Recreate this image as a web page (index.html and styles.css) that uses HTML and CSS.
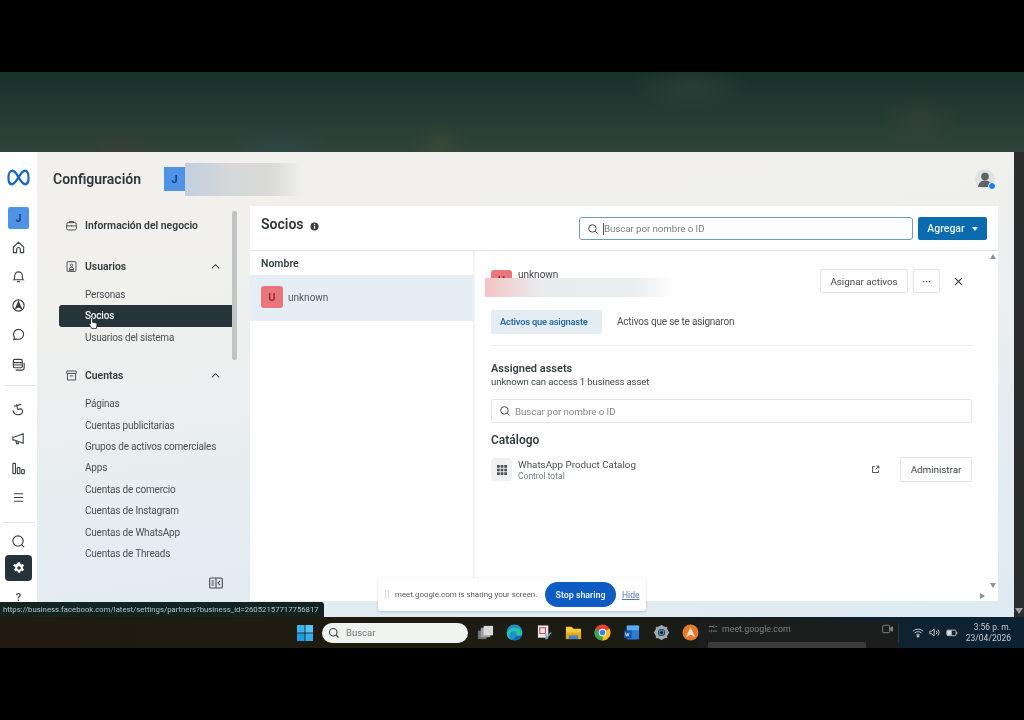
FILE: index.html
```html
<!DOCTYPE html>
<html lang="es">
<head>
    <meta charset="UTF-8">
    <title>Configuración - Socios</title>
    <link rel="stylesheet" href="styles.css">
</head>
<body>
    <div class="screen">
        <div class="letterbox top"></div>
        <div class="backdrop"></div>

        <div class="window">
            <nav class="rail">
                <svg class="meta" viewBox="0 0 24 15" preserveAspectRatio="none" fill="none"><path d="M12 7.500C9.500 3.200 7.800 1.600 5.500 1.600 3 1.600 1.500 4.200 1.500 8 1.500 11.300 3 13.400 5.200 13.400 7.500 13.400 9 11.300 12 7.500 15 3.200 16.500 1.600 18.700 1.600 21 1.600 22.500 4.200 22.500 8 22.500 11.300 21 13.400 18.800 13.400 16.500 13.400 15 11.300 12 7.500Z"/></svg>
                <div class="rail-tile">J</div>
                <div class="rail-group">
                    <svg viewBox="0 0 16 16"><path d="M2.500 7.500 8 2.500l5.500 5v6H10v-3.500a2 2 0 0 0-4 0v3.500H2.500Z"/></svg>
                    <svg viewBox="0 0 16 16"><path d="M3 11.500c1-1 1-2 1-4.500a4 4 0 0 1 8 0c0 2.500 0 3.500 1 4.500ZM6.500 13.500h3"/></svg>
                    <svg viewBox="0 0 16 16"><circle cx="8" cy="8" r="6"/><path class="solid" d="M8 4 11 11 8 9.500 5 11Z"/></svg>
                    <svg viewBox="0 0 16 16"><path d="M8 2.500a5.500 5.300 0 0 1 0 10.600c-.8 0-1.500-.1-2.200-.4L3 13.500l.6-2.700A5.300 5.300 0 0 1 8 2.500Z"/></svg>
                    <svg viewBox="0 0 16 16"><rect x="2.500" y="2.500" width="9.500" height="9" rx="1.500"/><path d="M2.500 6h9.500M2.500 8.500h9.500M14 6v6a2 2 0 0 1-2 2H5"/></svg>
                </div>
                <div class="rail-line"></div>
                <div class="rail-group second">
                    <svg viewBox="0 0 16 16"><path d="M3 4.500 11 2.500M6 2.500 7 8M2 9c1 4 4 5 7 4.500 3-.5 4-3 3-5-1-1.500-3-1.500-4.500 0"/></svg>
                    <svg viewBox="0 0 16 16"><path d="M2 6.500v3l2.500.3L13 13V3L4.500 6.200ZM5 10l1 3.500h2L7 10.800"/></svg>
                    <svg viewBox="0 0 16 16"><rect x="2" y="2.500" width="2.800" height="11" rx=".8"/><rect x="6.700" y="7" width="2.800" height="6.500" rx=".8"/><rect x="11.400" y="9" width="2.800" height="4.500" rx=".8"/></svg>
                    <svg viewBox="0 0 16 16"><path d="M3 4h10M3 8h10M3 12h10"/></svg>
                </div>
                <div class="rail-line low"></div>
                <svg class="rail-search" viewBox="0 0 16 16"><circle cx="7.500" cy="7.500" r="5.500"/><path d="m11.500 11.500 2.500 2.500"/></svg>
                <div class="rail-gear">
                    <svg viewBox="0 0 16 16"><path class="white" fill-rule="evenodd" d="M6.800 1.500h2.400l.4 1.900 1.100.6 1.800-.6 1.200 2.100-1.400 1.300v1.400l1.400 1.300-1.200 2.100-1.800-.6-1.100.6-.4 1.900H6.800l-.4-1.900-1.100-.6-1.800.6-1.200-2.100 1.400-1.300V6.800L1.300 5.500l1.200-2.100 1.800.6 1.100-.6ZM8 6a2 2 0 1 0 0 4 2 2 0 0 0 0-4Z"/></svg>
                </div>
                <div class="rail-help">?</div>
            </nav>

            <div class="main">
                <header class="topbar">
                    <h1>Configuración</h1>
                    <div class="biz-tile">J</div>
                    <div class="biz-name"></div>
                    <div class="me">
                        <svg viewBox="0 0 20 20"><circle cx="10" cy="10" r="10" fill="#dfe2e3"/><circle cx="10" cy="7.500" r="3.800" fill="#5c6266"/><path d="M3 18c.8-5 3.500-6.500 7-6.500s6.200 1.500 7 6.500Z" fill="#5c6266"/></svg>
                        <span class="me-badge"></span>
                    </div>
                </header>

                <div class="body">
                    <aside class="sidebar">
                        <div class="side-scroll">
                            <div class="side-head first">
                                <svg viewBox="0 0 16 16"><rect x="2" y="4.500" width="12" height="9" rx="2"/><path d="M5.500 4.500V3h5v1.500M2 8.500h12M8 7.800v1.500"/></svg>
                                <span>Información del negocio</span>
                            </div>
                            <div class="side-head">
                                <svg viewBox="0 0 16 16"><rect x="2.500" y="2" width="11" height="12" rx="1"/><circle cx="8" cy="6.500" r="1.500"/><path d="M5 11.500c.5-2 1.500-2.500 3-2.500s2.500.5 3 2.500ZM5 12.500h6"/></svg>
                                <span>Usuarios</span>
                                <svg class="chev" viewBox="0 0 12 12"><path d="m2 8 4-4 4 4"/></svg>
                            </div>
                            <ul class="side-list">
                                <li>Personas</li>
                                <li class="on">Socios</li>
                                <li>Usuarios del sistema</li>
                            </ul>
                            <div class="side-head accounts">
                                <svg viewBox="0 0 16 16"><rect x="2" y="2.500" width="12" height="3" rx=".6"/><path d="M3 5.500V13.500H13V5.500M6 8.500h4"/></svg>
                                <span>Cuentas</span>
                                <svg class="chev" viewBox="0 0 12 12"><path d="m2 8 4-4 4 4"/></svg>
                            </div>
                            <ul class="side-list">
                                <li>Páginas</li>
                                <li>Cuentas publicitarias</li>
                                <li>Grupos de activos comerciales</li>
                                <li>Apps</li>
                                <li>Cuentas de comercio</li>
                                <li>Cuentas de Instagram</li>
                                <li>Cuentas de WhatsApp</li>
                                <li>Cuentas de Threads</li>
                            </ul>
                            <div class="side-foot">
                                <svg viewBox="0 0 14 12"><rect x=".7" y="1" width="12.600" height="10" rx="1"/><path d="M7 1v10M2.500 4h2.500M2.500 6h2.500M2.500 8h2.500M11 3.800 9 6l2 2.200"/></svg>
                            </div>
                        </div>
                        <div class="side-thumb"></div>
                    </aside>

                    <section class="card">
                        <div class="card-head">
                            <h2>Socios</h2>
                            <svg class="info" viewBox="0 0 10 10"><circle cx="5" cy="5" r="4.500" fill="#3a3f42"/><path d="M4.300 4.500h1.400v3H4.300ZM4.300 2.300h1.400v1.300H4.300Z" fill="#fff"/></svg>
                            <div class="search top-search">
                                <svg viewBox="0 0 16 16"><circle cx="7.200" cy="7.200" r="5"/><path d="m11 11 3 3"/></svg>
                                <span class="caret"></span>
                                <span>Buscar por nombre o ID</span>
                            </div>
                            <button class="add">Agregar <i></i></button>
                        </div>

                        <div class="split">
                            <div class="people">
                                <div class="people-head">Nombre</div>
                                <div class="people-row">
                                    <div class="u-tile">U</div>
                                    <span>unknown</span>
                                </div>
                            </div>

                            <div class="detail">
                                <div class="detail-head">
                                    <div class="u-tile mini">U</div>
                                    <span class="detail-name">unknown</span>
                                    <button class="ghost assign">Asignar activos</button>
                                    <button class="ghost more">···</button>
                                    <svg class="close" viewBox="0 0 12 12"><path d="m1.500 1.500 9 9M10.500 1.500l-9 9"/></svg>
                                </div>
                                <div class="tabs">
                                    <span class="tab active">Activos que asignaste</span>
                                    <span class="tab">Activos que se te asignaron</span>
                                </div>
                                <h3>Assigned assets</h3>
                                <p class="sub">unknown can access 1 business asset</p>
                                <div class="search asset-search">
                                    <svg viewBox="0 0 16 16"><circle cx="7.200" cy="7.200" r="5"/><path d="m11 11 3 3"/></svg>
                                    <span>Buscar por nombre o ID</span>
                                </div>
                                <h3 class="cat">Catálogo</h3>
                                <div class="asset">
                                    <div class="asset-icon">
                                        <svg viewBox="0 0 11 11"><path d="M0 0h3v3H0ZM4 0h3v3H4ZM8 0h3v3H8ZM0 4h3v3H0ZM4 4h3v3H4ZM8 4h3v3H8ZM0 8h3v3H0ZM4 8h3v3H4ZM8 8h3v3H8Z"/></svg>
                                    </div>
                                    <div class="asset-text">
                                        <div>WhatsApp Product Catalog</div>
                                        <small>Control total</small>
                                    </div>
                                    <svg class="ext" viewBox="0 0 12 12"><path d="M5 2H2v8h8V7M7 1.500h3.500V5M10.500 1.500 6 6"/></svg>
                                    <button class="ghost manage">Administrar</button>
                                </div>
                            </div>
                            <i class="arrow up"></i>
                            <i class="arrow down"></i>
                            <i class="arrow right"></i>
                        </div>
                    </section>
                </div>
            </div>

            <div class="page-scroll"><i></i></div>

            <!-- smears over the name, the video had these blurred out -->
            <div class="smear"></div>
            <svg class="cursor" viewBox="0 0 12 16"><path d="M4 1.500c1 0 1.500.5 1.500 1.500v4l4 1c1 .3 1.500.8 1.300 2L10 14.500H4.500L1.500 10 1 8.500l2 .8V3c0-1 .3-1.500 1-1.500Z" fill="#fff" stroke="#222" stroke-width="1"/></svg>
            <div class="status-url">https://business.facebook.com/latest/settings/partners?business_id=26052157717756817</div>
            <div class="meet">
                <span class="grip"></span>
                <span class="meet-text">meet.google.com is sharing your screen.</span>
                <button class="stop">Stop sharing</button>
                <a class="hide">Hide</a>
            </div>
        </div>

        <footer class="taskbar">
            <svg class="win" viewBox="0 0 16 16"><path fill="#3db4ee" d="M0 0h7.600v7.600H0Z"/><path fill="#58c6f5" d="M8.400 0H16v7.600H8.400Z"/><path fill="#1f9ae0" d="M0 8.400h7.600V16H0Z"/><path fill="#34aeea" d="M8.400 8.400H16V16H8.400Z"/></svg>
            <div class="task-search">
                <svg viewBox="0 0 16 16"><circle cx="7" cy="7" r="5"/><path d="m10.500 10.500 3.500 3.500"/></svg>
                <span>Buscar</span>
            </div>
            <div class="task-icons">
                <svg viewBox="0 0 18 18"><rect x="1" y="7" width="9" height="9" fill="#6f7478"/><rect x="4" y="4" width="10" height="10" fill="#9aa0a3"/><rect x="7" y="2" width="10" height="10" fill="#d6dadb"/></svg>
                <svg viewBox="0 0 18 18"><circle cx="9" cy="9" r="8.500" fill="#1c8fd0"/><path d="M1 11C2 5 7 3 11 4c4 1 6 4 6 6 0 2-3 2.500-5 2-2.500-.5-2-3-.5-3.500C9 7 4 7 3.500 12c-.2 2 1 3.500 3 4.500C3.500 16 1.500 14 1 11Z" fill="#2bc4a0"/><path d="M11 12.500c2 .8 4 .5 5.500-.5-1 3-4 5-7 5-1.500 0-3-.5-3-.5 2 0 3.500-2 4.500-4Z" fill="#1565b0"/></svg>
                <svg viewBox="0 0 18 18"><rect x="2" y="1.500" width="11" height="13" fill="#e8e8ea"/><rect x="4" y="4" width="6" height="6" fill="none" stroke="#c23b3b"/><path d="M10 16 16 9M12 16l-2-6" stroke="#7da0c8" stroke-width="1.400"/></svg>
                <svg viewBox="0 0 18 18"><path d="M1 3h6l2 2h8v11H1Z" fill="#f7c93e"/><rect x="1" y="9" width="16" height="7" fill="#e9a820"/><rect x="4" y="12" width="10" height="4" fill="#3e87c7"/></svg>
                <svg viewBox="0 0 18 18"><circle cx="9" cy="9" r="8.500" fill="#e5413a"/><path d="M9 9 16.400 5A8.500 8.500 0 0 1 9 17.500Z" fill="#f8c51e"/><path d="M9 9 9 17.500A8.500 8.500 0 0 1 1.600 5Z" fill="#34a853"/><circle cx="9" cy="9" r="4" fill="#fff"/><circle cx="9" cy="9" r="3" fill="#3a82e4"/></svg>
                <svg viewBox="0 0 18 18"><rect x="4" y="1.500" width="13" height="15" rx="1.500" fill="#2b7cd3"/><rect x="4" y="1.500" width="13" height="5" rx="1" fill="#5aa9ec"/><rect x="1" y="7" width="8" height="8" rx="1" fill="#174f9c"/><path d="m2.500 9 1 4 1-3 1 3 1-4" stroke="#fff" stroke-width=".7" fill="none"/></svg>
                <svg viewBox="0 0 18 18"><circle cx="9" cy="9" r="5.500" fill="none" stroke="#9fa8b0" stroke-width="3.400"/><circle cx="9" cy="9" r="2.400" fill="none" stroke="#3f8bc9" stroke-width="1.400"/><path d="M9 1v3M9 14v3M1 9h3M14 9h3M3.300 3.300l2 2M12.700 12.700l2 2M14.700 3.300l-2 2M5.300 12.700l-2 2" stroke="#9fa8b0" stroke-width="2"/></svg>
                <svg viewBox="0 0 18 18"><circle cx="9" cy="9" r="8.500" fill="#e8792a"/><path d="M4 14 9 3.500l5 10.500-5-3Z" fill="#fbe1c5"/></svg>
            </div>
            <div class="task-meet">
                <svg viewBox="0 0 12 12"><path d="M1 3h5M9 3h2M1 8.500h2M6 8.500h5M7 1.500v3M4.500 7v3"/></svg>
                <span>meet.google.com</span>
                <svg class="cam" viewBox="0 0 12 10"><rect x=".7" y="1" width="7.600" height="8" rx="1"/><path class="solid" d="M9 4l2.500-1.500v5L9 6Z"/></svg>
                <div class="thumb"></div>
            </div>
            <div class="tray">
                <svg viewBox="0 0 14 12"><path d="M1 4.500a8.500 8.500 0 0 1 12 0M3 6.700a5.500 5.500 0 0 1 8 0M5 8.800a2.800 2.800 0 0 1 4 0"/><circle class="solid" cx="7" cy="10.500" r="1"/></svg>
                <svg viewBox="0 0 14 12"><path d="M1 4.500v3h2l3 2.500V2L3 4.500ZM8.500 4a3 3 0 0 1 0 4M10.500 2.500a5.500 5.500 0 0 1 0 7"/></svg>
                <svg viewBox="0 0 15 12"><rect x="1" y="3" width="11.500" height="7" rx="1.500"/><path d="M13.500 5.300v2.400"/><rect class="solid" x="2" y="4" width="4.500" height="5"/></svg>
                <div class="clock"><div>3:56 p. m.</div><div>23/04/2026</div></div>
            </div>
        </footer>
        <div class="letterbox bottom"></div>
    </div>
</body>
</html>
```

FILE: styles.css
```css
* {
    box-sizing: border-box;
}

html, body {
    margin: 0;
    padding: 0;
    background: #000;
}

body {
    font-family: "Roboto", "Noto Sans", sans-serif;
    font-size: 10.5px;
    color: #3d4347;
}

button {
    font-family: inherit;
    cursor: pointer;
}

ul {
    list-style: none;
    margin: 0;
    padding: 0;
}

/* the source is a video frame, so everything is a touch soft */
.screen {
    width: 1024px;
    height: 720px;
    display: flex;
    flex-direction: column;
    overflow: hidden;
    filter: blur(.35px);
}

.letterbox.top {
    height: 72px;
    flex: none;
}

.letterbox.bottom {
    height: 72px;
    flex: none;
}

.backdrop {
    height: 80px;
    flex: none;
    background:
        radial-gradient(ellipse 40px 30px at 120px 80px, rgba(90, 50, 40, .22), transparent),
        radial-gradient(ellipse 30px 30px at 440px 75px, rgba(90, 90, 30, .22), transparent),
        radial-gradient(ellipse 50px 30px at 280px 75px, rgba(50, 90, 100, .18), transparent),
        radial-gradient(ellipse 60px 25px at 690px 15px, rgba(90, 110, 100, .18), transparent),
        radial-gradient(ellipse 40px 30px at 920px 50px, rgba(100, 80, 60, .18), transparent),
        linear-gradient(#18312a, #2f443b);
}

/* app window */
.window {
    position: relative;
    height: 465px;
    flex: none;
    display: flex;
    background: #fff;
}

.rail {
    width: 37px;
    flex: none;
    display: flex;
    flex-direction: column;
    align-items: center;
    background: #fff;
}

.rail svg {
    fill: none;
    stroke: #3a4044;
    stroke-width: 1.200;
}

.rail svg .solid {
    fill: #3a4044;
}

.rail .meta {
    width: 23px;
    height: 17px;
    margin-top: 17px;
    stroke: #1668c4;
    stroke-width: 2.300;
}

.rail-tile {
    width: 21px;
    height: 22px;
    margin-top: 21px;
    border-radius: 2px;
    background: #4f93e6;
    color: #123f78;
    font-size: 10px;
    font-weight: 700;
    display: flex;
    align-items: center;
    justify-content: center;
}

.rail-group {
    display: flex;
    flex-direction: column;
    align-items: center;
    gap: 14.250px;
    margin-top: 10.500px;
}

.rail-group svg {
    width: 15px;
    height: 15px;
}

.rail-group.second {
    margin-top: 15.500px;
    gap: 14.500px;
}

.rail-line {
    width: 32px;
    height: 1px;
    background: #e6e8ea;
    margin-top: 13.500px;
}

.rail-line.low {
    margin-top: 16.500px;
}

.rail-search {
    width: 15px;
    height: 15px;
    margin-top: 11px;
    flex: none;
}

.rail-gear {
    width: 27px;
    height: 26px;
    margin-top: 6px;
    background: #27333a;
    border-radius: 4px;
    display: flex;
    align-items: center;
    justify-content: center;
}

.rail-gear svg {
    width: 14px;
    height: 14px;
    stroke: none;
}

.rail-gear .white {
    fill: #fff;
}

.rail-help {
    margin-top: 10px;
    font-size: 11px;
    font-weight: 600;
    color: #4a5054;
}

.main {
    flex: 1;
    min-width: 0;
    display: flex;
    flex-direction: column;
    background: linear-gradient(172deg, #f2f0ec 0%, #f0f0ed 25%, #e3ecf2 75%, #deeaf2 100%);
}

.topbar {
    height: 54px;
    flex: none;
    display: flex;
    align-items: center;
    padding-left: 16px;
}

.topbar h1 {
    margin: 0;
    font-size: 14px;
    font-weight: 600;
    color: #2f3538;
    width: 111px;
}

.biz-tile {
    width: 21px;
    height: 24px;
    background: #4f93e6;
    color: #123f78;
    font-size: 11px;
    font-weight: 700;
    display: flex;
    align-items: center;
    justify-content: center;
}

.biz-name {
    width: 115px;
    height: 33px;
    background: linear-gradient(90deg, #c3cfde, #d6d7d9 40%, #dadad8 75%, #eeeeea);
}

.me {
    position: relative;
    width: 20px;
    height: 20px;
    margin-left: auto;
    margin-right: 19px;
}

.me svg {
    display: block;
    width: 20px;
    height: 20px;
}

.me-badge {
    position: absolute;
    right: -1px;
    bottom: -1px;
    width: 8px;
    height: 8px;
    border-radius: 50%;
    background: #1877f2;
    border: 1px solid #fff;
}

.body {
    height: 395px;
    display: flex;
}

.sidebar {
    position: relative;
    width: 213px;
    flex: none;
    display: flex;
}

.side-scroll {
    width: 173px;
    margin-left: 22px;
    padding-top: 8px;
}

.side-head {
    display: flex;
    align-items: center;
    gap: 7px;
    height: 22px;
    padding-left: 6px;
    padding-right: 11px;
    margin-top: 19px;
    font-size: 10.400px;
    font-weight: 600;
    color: #32383b;
}

.side-head.first {
    margin-top: 0;
}

.side-head.accounts {
    margin-top: 16px;
}

.side-head svg {
    width: 13px;
    height: 13px;
    flex: none;
    fill: none;
    stroke: #3a4044;
    stroke-width: 1.100;
}

.side-head .chev {
    width: 11px;
    height: 11px;
    margin-left: auto;
}

.side-list {
    margin-top: 7px;
}

.side-list li {
    height: 21.400px;
    line-height: 21.400px;
    padding-left: 26px;
    color: #4a5054;
    font-size: 10px;
    letter-spacing: -.2px;
}

.side-list li.on {
    background: #26343a;
    color: #f1f4f5;
    border-radius: 3px 0 0 3px;
    font-weight: 500;
}

.side-foot {
    display: flex;
    justify-content: flex-end;
    padding-right: 9px;
    margin-top: 13px;
}

.side-foot svg {
    width: 14px;
    height: 12px;
    fill: none;
    stroke: #40474b;
    stroke-width: 1.100;
}

.side-thumb {
    position: absolute;
    left: 195px;
    top: 5px;
    width: 5px;
    height: 149px;
    background: #c2c5c6;
    border-radius: 2px;
}

.card {
    width: 748px;
    flex: none;
    background: #fff;
    display: flex;
    flex-direction: column;
}

.card-head {
    height: 45px;
    flex: none;
    display: flex;
    align-items: flex-start;
    padding: 10px 11px 0 11px;
    border-bottom: 1px solid #e2e5e6;
}

.card-head h2 {
    margin: 0;
    font-size: 14px;
    line-height: 17px;
    font-weight: 600;
    color: #2f3538;
}

.info {
    width: 9px;
    height: 9px;
    margin: 6px 0 0 6px;
}

.search {
    display: flex;
    align-items: center;
    gap: 4px;
    background: #fff;
    color: #7b8185;
    font-size: 9.800px;
    letter-spacing: -.1px;
}

.search svg {
    width: 12px;
    height: 12px;
    flex: none;
    fill: none;
    stroke: #3f4548;
    stroke-width: 1.300;
}

.top-search {
    width: 334px;
    height: 23px;
    margin: 1px 0 0 auto;
    padding-left: 7px;
    border: 1px solid #6f9fae;
    border-radius: 3px;
}

.caret {
    width: 1px;
    height: 12px;
    background: #555;
    margin-right: -4px;
}

.add {
    width: 69px;
    height: 23px;
    margin: 1px 0 0 5px;
    border: none;
    border-radius: 2px;
    background: #0a6cae;
    color: #e6f1f8;
    font-size: 10.500px;
    font-weight: 500;
    display: flex;
    align-items: center;
    justify-content: center;
    gap: 7px;
}

.add i {
    width: 0;
    height: 0;
    border-left: 3.500px solid transparent;
    border-right: 3.500px solid transparent;
    border-top: 4px solid #e6f1f8;
}

.split {
    position: relative;
    flex: 1;
    display: flex;
    min-height: 0;
}

.people {
    width: 225px;
    flex: none;
    border-right: 2px solid #f1f3f4;
}

.people-head {
    height: 24px;
    padding: 6px 0 0 11px;
    line-height: 13px;
    font-weight: 600;
    color: #3a4044;
}

.people-row {
    height: 46px;
    display: flex;
    align-items: center;
    gap: 5px;
    padding: 0 0 2px 11px;
    background: #e6eef5;
    color: #50565a;
    font-size: 10px;
}

.u-tile {
    width: 22px;
    height: 22px;
    border-radius: 3px;
    background: #e9767b;
    color: #a32c33;
    font-size: 11px;
    font-weight: 700;
    display: flex;
    align-items: center;
    justify-content: center;
}

.detail {
    flex: 1;
    min-width: 0;
    padding: 18px 26px 0 16px;
}

.detail-head {
    display: flex;
    align-items: flex-start;
    height: 41px;
}

.u-tile.mini {
    width: 21px;
    height: 21px;
    flex: none;
    margin-top: 1px;
}

.detail-name {
    margin-left: 6px;
    font-size: 10px;
    line-height: 12px;
    color: #3f4548;
}

.ghost {
    background: #fff;
    border: 1px solid #dfe2e4;
    border-radius: 2px;
    color: #40464a;
    font-size: 9.800px;
    padding: 0;
}

.assign {
    width: 88px;
    height: 24px;
    margin-left: auto;
}

.more {
    width: 27px;
    height: 24px;
    margin-left: 5px;
    font-weight: 700;
}

.close {
    width: 9px;
    height: 9px;
    margin: 8px 9px 0 14px;
    fill: none;
    stroke: #33393c;
    stroke-width: 1.500;
}

.tabs {
    display: flex;
    align-items: center;
    gap: 6px;
    height: 36px;
    padding-bottom: 11px;
    border-bottom: 1px solid #eceeef;
    margin-bottom: 16px;
}

.tab {
    height: 24px;
    line-height: 24px;
    padding: 0 9px;
    color: #4a5054;
    font-size: 10px;
    letter-spacing: -.2px;
}

.tab.active {
    width: 111px;
    background: #e4edf3;
    border-radius: 2px;
    color: #2a6c9e;
    font-size: 9.300px;
    font-weight: 600;
    white-space: nowrap;
}

h3 {
    margin: 0;
    font-size: 11px;
    line-height: 14px;
    font-weight: 600;
    color: #353b3e;
}

.sub {
    margin: 0;
    font-size: 9.600px;
    letter-spacing: -.15px;
    line-height: 12px;
    color: #3f4548;
}

.asset-search {
    height: 24px;
    margin-top: 11px;
    padding-left: 7px;
    border: 1px solid #e3e6e8;
    border-radius: 2px;
    color: #83898d;
}

h3.cat {
    margin-top: 10px;
    font-size: 12px;
}

.asset {
    display: flex;
    align-items: center;
    margin-top: 10px;
}

.asset-icon {
    width: 21px;
    height: 23px;
    flex: none;
    border-radius: 4px;
    background: #eef1ef;
    display: flex;
    align-items: center;
    justify-content: center;
}

.asset-icon svg {
    width: 10px;
    height: 10px;
    fill: #494f52;
}

.asset-text {
    margin-left: 6px;
    line-height: 13px;
    color: #4a5054;
    font-size: 9.800px;
}

.asset-text small {
    display: block;
    font-size: 8.500px;
    line-height: 10px;
    color: #777d81;
}

.ext {
    width: 9px;
    height: 9px;
    margin-left: auto;
    fill: none;
    stroke: #3f4548;
    stroke-width: 1.200;
}

.manage {
    width: 72px;
    height: 25px;
    margin-left: 20px;
}

.arrow {
    position: absolute;
    width: 0;
    height: 0;
}

.arrow.up {
    right: 2px;
    top: 3px;
    border-left: 3.500px solid transparent;
    border-right: 3.500px solid transparent;
    border-bottom: 5px solid #8c9193;
}

.arrow.down {
    right: 2px;
    bottom: 13px;
    border-left: 3.500px solid transparent;
    border-right: 3.500px solid transparent;
    border-top: 5px solid #8c9193;
}

.arrow.right {
    right: 13px;
    bottom: 2px;
    border-top: 3.500px solid transparent;
    border-bottom: 3.500px solid transparent;
    border-left: 5px solid #8c9193;
}

.page-scroll {
    width: 10px;
    flex: none;
    background: #2a2c2d;
    position: relative;
}

.page-scroll i {
    position: absolute;
    left: 1px;
    bottom: 3px;
    border-left: 4px solid transparent;
    border-right: 4px solid transparent;
    border-top: 6px solid #9a9d9e;
}

/* things lying over the window */
.smear {
    position: absolute;
    left: 485px;
    top: 126px;
    width: 190px;
    height: 19px;
    background: linear-gradient(90deg, #f3c3c4, #f0d4d6 12%, #e8edf0 30%, #e9eef1 80%, #fff);
}

.cursor {
    position: absolute;
    left: 88px;
    top: 164px;
    width: 10px;
    height: 14px;
}

.status-url {
    position: absolute;
    left: 0;
    bottom: 0;
    width: 324px;
    height: 15px;
    padding-left: 3px;
    line-height: 15px;
    background: #122320;
    border-radius: 0 3px 0 0;
    color: #a9c4d6;
    font-size: 7.750px;
    white-space: nowrap;
    overflow: hidden;
}

.meet {
    position: absolute;
    left: 378px;
    top: 426px;
    width: 268px;
    height: 33px;
    display: flex;
    align-items: center;
    padding-left: 7px;
    background: #fff;
    border-radius: 3px;
    box-shadow: 0 1px 3px rgba(0, 0, 0, .18);
}

.grip {
    width: 4px;
    height: 9px;
    flex: none;
    border-left: 1px solid #d8d8d8;
    border-right: 1px solid #d8d8d8;
}

.meet-text {
    width: 143px;
    flex: none;
    margin-left: 6px;
    font-size: 7.900px;
    color: #55595c;
    white-space: nowrap;
}

.stop {
    width: 71px;
    height: 25px;
    margin-left: 7px;
    flex: none;
    border: none;
    border-radius: 13px;
    background: #0f5bc4;
    color: #e8f0fb;
    font-size: 8.800px;
    font-weight: 600;
}

.hide {
    margin-left: 6px;
    font-size: 8.500px;
    color: #5a72b8;
    text-decoration: underline;
}

/* windows taskbar */
.taskbar {
    height: 31px;
    flex: none;
    display: flex;
    align-items: center;
    overflow: hidden;
    background: linear-gradient(90deg, #201a10 0%, #1d1c12 60%, #171c18 68%, #0f2230 88%, #0c2233 100%);
}

.win {
    width: 16px;
    height: 16px;
    margin-left: 297px;
    flex: none;
}

.task-search {
    width: 146px;
    height: 20px;
    margin-left: 9px;
    flex: none;
    display: flex;
    align-items: center;
    gap: 6px;
    padding-left: 6px;
    border-radius: 10px;
    background: #eef3f0;
    color: #6f7477;
    font-size: 9.500px;
}

.task-search svg {
    width: 12px;
    height: 12px;
    fill: none;
    stroke: #3b3f41;
    stroke-width: 1.500;
}

.task-icons {
    display: flex;
    gap: 12.300px;
    margin-left: 9px;
    flex: none;
}

.task-icons svg {
    width: 17px;
    height: 17px;
    display: block;
}

.task-meet {
    position: relative;
    width: 199px;
    height: 27px;
    margin-top: 4px;
    flex: none;
    display: flex;
    align-items: flex-start;
    gap: 4px;
    padding: 3px 5px 0 9px;
    background: #1b1e1c;
    color: #7d8283;
    font-size: 8.800px;
    line-height: 10px;
}

.task-meet svg {
    width: 10px;
    height: 10px;
    fill: none;
    stroke: #83888a;
    stroke-width: 1;
}

.task-meet .cam {
    margin-left: auto;
    width: 11px;
}

.task-meet .solid {
    fill: #83888a;
}

.thumb {
    position: absolute;
    left: 9px;
    top: 21px;
    width: 158px;
    height: 6px;
    background: #3a3c3b;
    border-radius: 2px 2px 0 0;
}

.tray {
    flex: 1;
    display: flex;
    align-items: center;
    gap: 5px;
    padding-left: 13px;
    border-left: 1px solid #2a3338;
    height: 20px;
}

.tray svg {
    width: 12px;
    height: 11px;
    fill: none;
    stroke: #d6dee3;
    stroke-width: 1;
    flex: none;
}

.tray .solid {
    fill: #d6dee3;
}

.clock {
    margin-left: auto;
    margin-right: 13px;
    text-align: right;
    color: #c4ced4;
    font-size: 8.500px;
    line-height: 11px;
    white-space: nowrap;
}
```
